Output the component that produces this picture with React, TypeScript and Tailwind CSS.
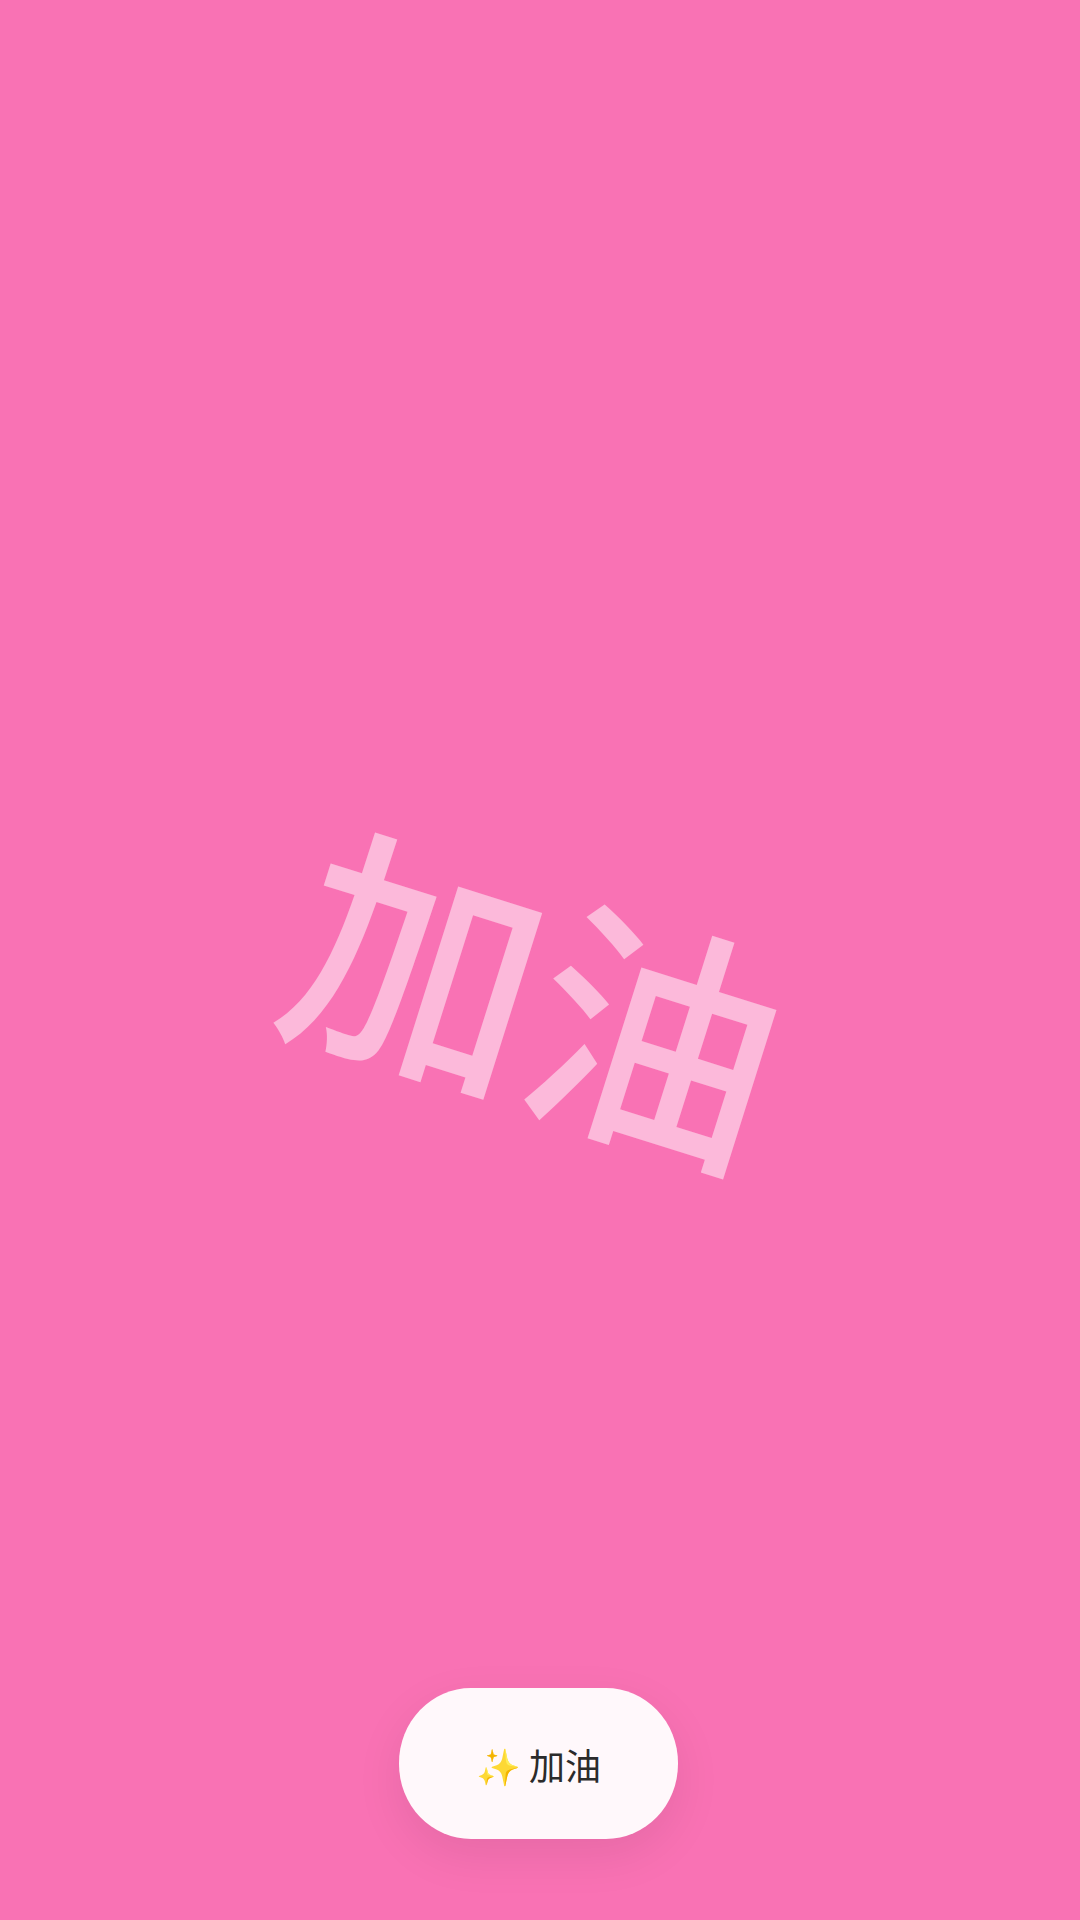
export default function App() {
  return (
    <div
      className="relative flex h-[1920px] w-[1080px] items-center justify-center overflow-hidden bg-[#f972b4]"
      style={{ fontFamily: '"Noto Sans CJK SC", "Noto Sans", sans-serif' }}
    >
      <div className="mt-[56px] rotate-[17.5deg] select-none text-[250px] font-medium leading-none text-white/50">
        加油
      </div>
      <button className="absolute bottom-[81px] left-[399px] flex h-[151px] w-[279px] items-center justify-center gap-2 rounded-[72px/75px] bg-[#fff8fb] text-[36px] text-[#2b2b2b] shadow-[0_16px_48px_rgba(0,0,0,0.08)]">
        <span>✨</span>
        <span>加油</span>
      </button>
    </div>
  )
}
